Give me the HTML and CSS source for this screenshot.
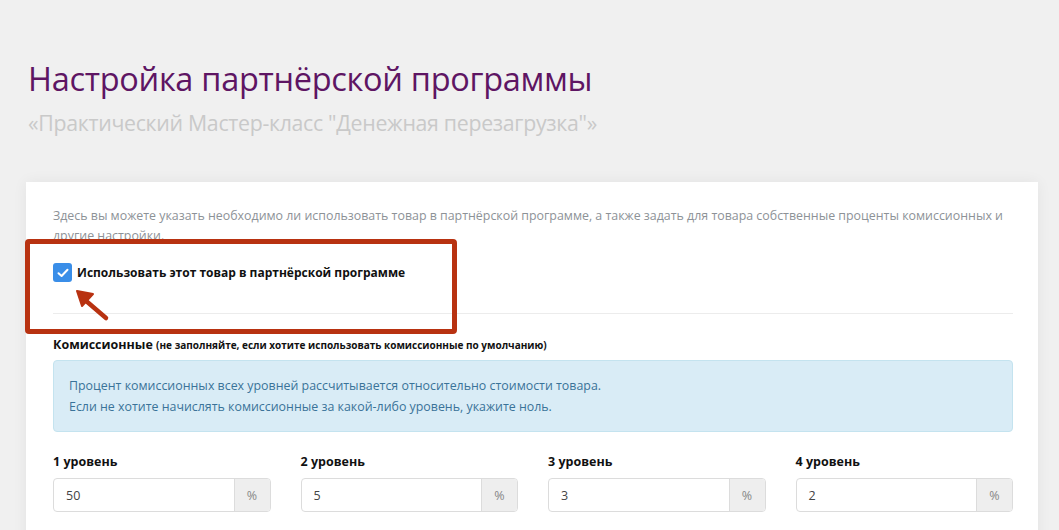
FILE: index.html
```html
<!DOCTYPE html>
<html lang="ru">

<head>
    <meta charset="UTF-8">
    <title>Настройка партнёрской программы</title>
    <link rel="stylesheet" href="styles.css">
</head>

<body>

    <div class="page">
        <div class="page-header">
            <h1>Настройка партнёрской программы</h1>
            <div class="subtitle">«Практический Мастер-класс "Денежная перезагрузка"»</div>
        </div>

        <div class="card">
            <p class="intro">Здесь вы можете указать необходимо ли использовать товар в партнёрской программе, а также задать для товара собственные проценты комиссионных и другие настройки.</p>

            <label class="check-row">
                <span class="checkbox">
                    <svg width="12" height="10" viewBox="0 0 12 10"><path d="M1.5 5.2 L4.6 8 L10.5 1.8" fill="none" stroke="#fff" stroke-width="2" stroke-linecap="round" stroke-linejoin="round"/></svg>
                </span>
                Использовать этот товар в партнёрской программе
            </label>

            <hr>

            <div class="section-title">Комиссионные <small>(не заполняйте, если хотите использовать комиссионные по умолчанию)</small></div>

            <div class="alert">
                Процент комиссионных всех уровней рассчитывается относительно стоимости товара.<br>
                Если не хотите начислять комиссионные за какой-либо уровень, укажите ноль.
            </div>

            <div class="levels">
                <div class="level">
                    <div class="level-label">1 уровень</div>
                    <div class="input-group"><span class="input">50</span><span class="addon">%</span></div>
                </div>
                <div class="level">
                    <div class="level-label">2 уровень</div>
                    <div class="input-group"><span class="input">5</span><span class="addon">%</span></div>
                </div>
                <div class="level">
                    <div class="level-label">3 уровень</div>
                    <div class="input-group"><span class="input">3</span><span class="addon">%</span></div>
                </div>
                <div class="level">
                    <div class="level-label">4 уровень</div>
                    <div class="input-group"><span class="input">2</span><span class="addon">%</span></div>
                </div>
            </div>

            <!-- screenshot annotation -->
            <div class="highlight"></div>
            <svg class="pointer" width="40" height="36" viewBox="0 0 40 36">
                <path d="M32 31 L11 13" stroke="#b83211" stroke-width="4.5" stroke-linecap="round"/>
                <path d="M3 4 L19 7 L8 19 Z" fill="#b83211" stroke="#b83211" stroke-width="2" stroke-linejoin="round"/>
            </svg>
        </div>
    </div>

</body>

</html>
```

FILE: styles.css
```css
body {
    margin: 0;
    background: #f0f0f0;
    font-family: "Open Sans", Arial, sans-serif;
    color: #222;
    overflow: hidden;
}

.page {
    padding: 0 21px 0 26px;
}

.page-header {
    padding: 59px 0 0 2px;
    height: 182px;
    box-sizing: border-box;
}

h1 {
    margin: 0;
    font-size: 32.5px;
    font-weight: 400;
    color: #5e1563;
    letter-spacing: -0.3px;
    line-height: 40px;
}

.subtitle {
    margin-top: 9px;
    font-size: 21.3px;
    color: #c9c9c9;
    letter-spacing: -0.3px;
}

/* Card */
.card {
    position: relative;
    background: #fff;
    padding: 24px 25px 40px 27px;
    box-shadow: 0 0 14px rgba(0, 0, 0, 0.06);
    height: 400px;
}

.intro {
    margin: 0;
    font-size: 12.4px;
    line-height: 20px;
    color: #8d9297;
    padding-right: 8px;
}

.check-row {
    display: flex;
    align-items: center;
    gap: 5px;
    margin-top: 17px;
    font-size: 12px;
    font-weight: 700;
    color: #111;
}

.checkbox {
    width: 19px;
    height: 19px;
    border-radius: 3px;
    background: #3a8ee8;
    display: flex;
    align-items: center;
    justify-content: center;
}

hr {
    border: none;
    border-top: 1px solid #ececec;
    margin: 31px 0 0;
}

.section-title {
    margin-top: 22px;
    font-size: 12.5px;
    font-weight: 700;
    color: #111;
}

.section-title small {
    font-size: 10px;
}

.alert {
    margin-top: 7px;
    background: #d9ecf6;
    border: 1px solid #c4e3ef;
    border-radius: 4px;
    padding: 14px 15px;
    color: #3a7399;
    font-size: 12.4px;
    line-height: 21px;
}

.levels {
    display: grid;
    grid-template-columns: repeat(4, 1fr);
    gap: 30px;
    margin-top: 21px;
}

.level-label {
    font-size: 12.5px;
    font-weight: 700;
    color: #111;
    line-height: 18px;
}

.input-group {
    display: flex;
    margin-top: 7px;
    height: 34px;
    border: 1px solid #dcdcdc;
    border-radius: 4px;
    box-sizing: border-box;
    overflow: hidden;
}

.input {
    flex: 1;
    padding: 0 12px;
    display: flex;
    align-items: center;
    font-size: 12.5px;
    color: #444;
}

.addon {
    width: 35px;
    background: #eeeeee;
    border-left: 1px solid #dcdcdc;
    display: flex;
    align-items: center;
    justify-content: center;
    font-size: 12.5px;
    color: #888;
}

.highlight {
    position: absolute;
    left: -1px;
    top: 57px;
    width: 422px;
    height: 85px;
    border: 5px solid #b83211;
    border-radius: 4px;
}

.pointer {
    position: absolute;
    left: 48px;
    top: 105px;
}
```
